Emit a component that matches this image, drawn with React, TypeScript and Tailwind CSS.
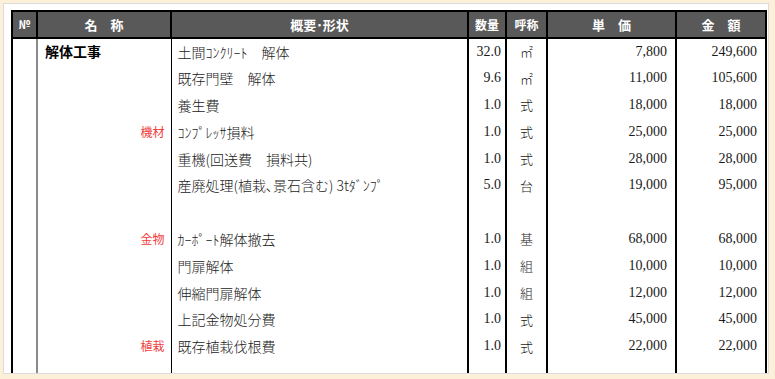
const rows = [
  { cat: "解体工事", bold: true, desc: "土間ｺﾝｸﾘｰﾄ　解体", qty: "32.0", unit: "㎡", price: "7,800", amount: "249,600" },
  { desc: "既存門壁　解体", qty: "9.6", unit: "㎡", price: "11,000", amount: "105,600" },
  { desc: "養生費", qty: "1.0", unit: "式", price: "18,000", amount: "18,000" },
  { cat: "機材", desc: "ｺﾝﾌﾟﾚｯｻ損料", qty: "1.0", unit: "式", price: "25,000", amount: "25,000" },
  { desc: "重機(回送費　損料共)", qty: "1.0", unit: "式", price: "28,000", amount: "28,000" },
  { desc: "産廃処理(植栽､景石含む) 3tﾀﾞﾝﾌﾟ", qty: "5.0", unit: "台", price: "19,000", amount: "95,000" },
  {},
  { cat: "金物", desc: "ｶｰﾎﾟｰﾄ解体撤去", qty: "1.0", unit: "基", price: "68,000", amount: "68,000" },
  { desc: "門扉解体", qty: "1.0", unit: "組", price: "10,000", amount: "10,000" },
  { desc: "伸縮門扉解体", qty: "1.0", unit: "組", price: "12,000", amount: "12,000" },
  { desc: "上記金物処分費", qty: "1.0", unit: "式", price: "45,000", amount: "45,000" },
  { cat: "植栽", desc: "既存植栽伐根費", qty: "1.0", unit: "式", price: "22,000", amount: "22,000" },
  {},
] as { cat?: string; bold?: boolean; desc?: string; qty?: string; unit?: string; price?: string; amount?: string }[];

const serif = { fontFamily: '"Liberation Serif", "Noto Sans CJK JP", serif' };

export default function App() {
  return (
    <div className="h-screen w-full bg-[#fcf0d8] pt-[3px] pl-[3px]">
      <div className="h-[371px] w-[766px] overflow-hidden border border-[#dcdcdc] bg-white pl-[7px] pt-[6px]">
        <table className="w-[754px] table-fixed border-collapse text-[#1a1a1a]" style={serif}>
          <colgroup>
            <col className="w-[25px]" />
            <col className="w-[134px]" />
            <col className="w-[297px]" />
            <col className="w-[38px]" />
            <col className="w-[41px]" />
            <col className="w-[129px]" />
            <col className="w-[90px]" />
          </colgroup>
          <thead>
            <tr className="h-[27px] bg-[#595959] text-[13px] font-bold text-white" style={{ fontFamily: '"Noto Sans CJK JP", sans-serif' }}>
              <th className="border-2 border-black text-[11px]">№</th>
              <th className="border-2 border-black">名　称</th>
              <th className="border-2 border-black">概要･形状</th>
              <th className="border-2 border-black text-[12px]">数量</th>
              <th className="border-2 border-black text-[12px]">呼称</th>
              <th className="border-2 border-black">単　価</th>
              <th className="border-2 border-black">金　額</th>
            </tr>
          </thead>
          <tbody>
            {rows.map((r, i) => (
              <tr key={i} className="h-[26.8px] text-[14px] leading-none">
                <td className="border-l-2 border-r-2 border-l-black border-r-[#8a8a8a]"></td>
                <td className="border-r border-black pr-[6px]">
                  {r.cat && r.bold && (
                    <span className="pl-[7px] text-[14px] font-bold text-black" style={{ fontFamily: '"Noto Sans CJK JP", sans-serif' }}>
                      {r.cat}
                    </span>
                  )}
                  {r.cat && !r.bold && (
                    <div className="text-right text-[12px] text-[#f03c3c]" style={{ fontFamily: '"Noto Sans CJK JP", sans-serif' }}>{r.cat}</div>
                  )}
                </td>
                <td className="border-r-2 border-black pl-[6px] whitespace-nowrap" style={{ fontFamily: '"Noto Sans CJK JP", sans-serif', fontWeight: 300 }}>
                  {r.desc}
                </td>
                <td className="border-r-2 border-black pr-[4px] text-right">{r.qty}</td>
                <td className="border-r-2 border-black text-center text-[13px]" style={{ fontFamily: '"Noto Sans CJK JP", sans-serif', fontWeight: 300 }}>
                  {r.unit}
                </td>
                <td className="border-r-2 border-black pr-[8px] text-right">{r.price}</td>
                <td className="border-r-2 border-black pr-[8px] text-right">{r.amount}</td>
              </tr>
            ))}
          </tbody>
        </table>
      </div>
    </div>
  );
}
